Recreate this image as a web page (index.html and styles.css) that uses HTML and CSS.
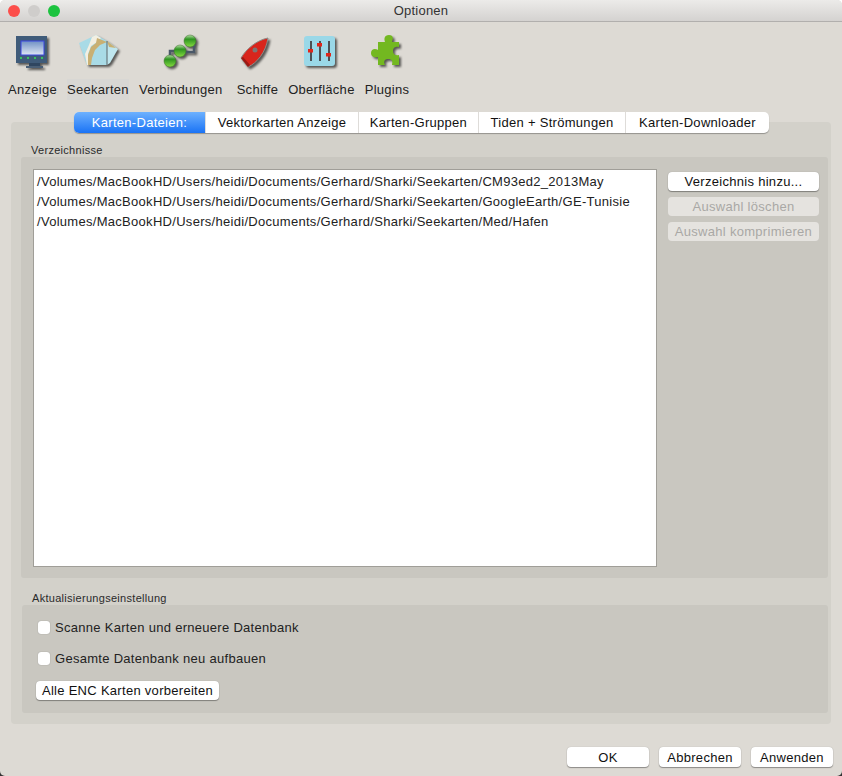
FILE: index.html
```html
<!DOCTYPE html>
<html>
  <head>
    <meta charset="UTF-8" />
    <meta name="viewport" content="width=device-width, initial-scale=1.0" />
    <title>Optionen</title>
    <link rel="stylesheet" href="styles.css">
  </head>
  <body>
    <div class="window">
      <div class="titlebar">
        <div class="lights">
          <span class="light light-red"></span>
          <span class="light light-off"></span>
          <span class="light light-green"></span>
        </div>
        <div class="title">Optionen</div>
      </div>

      <div class="toolbar">
        <div class="tool">
          <svg class="tool-icon" viewBox="0 0 40 40">
            <defs>
              <linearGradient id="screenFill" x1="0" y1="0" x2="0" y2="1">
                <stop offset="0" stop-color="#6f90c4" />
                <stop offset="1" stop-color="#dfe6f4" />
              </linearGradient>
            </defs>
            <rect x="16" y="32" width="11" height="4" fill="#2f4660" />
            <rect x="13" y="36" width="17" height="2" fill="#4a5f76" />
            <rect x="3" y="6" width="31" height="27" fill="#3f5b79" />
            <rect x="8" y="11" width="23" height="14" fill="url(#screenFill)" stroke="#3a44e0" stroke-width="1" />
            <rect x="7" y="27" width="2" height="2" fill="#38c060" />
            <rect x="14" y="27" width="2" height="2" fill="#38c060" />
            <rect x="21" y="27" width="2" height="2" fill="#38c060" />
            <rect x="28" y="27" width="2" height="2" fill="#38c060" />
          </svg>
          <span class="tool-label">Anzeige</span>
        </div>
        <div class="tool tool-active">
          <svg class="tool-icon" viewBox="0 0 40 40">
            <path d="M1 13 L18 5 L29 11 L29 35 L9 35 Z" fill="#a9dbe6" />
            <path d="M29 11 L40 19 L32 33 L29 35 Z" fill="#bfe6ee" />
            <path d="M14 7 L18 5 L23 8 L19 12 L13 16 L10 24 L10 35 L9 35 L7 24 L11 15 Z" fill="#f2efe2" />
            <path d="M19 8 L29 12 L22 15 L17 20 L14 28 L13 35 L10 35 L10 25 L13 17 L18 13 Z" fill="#c9b073" />
            <path d="M29 11 L38 18 L31 17 Z" fill="#c9b073" />
            <path d="M29 11 V35" stroke="#5a6468" stroke-width="1" fill="none" />
          </svg>
          <span class="tool-label">Seekarten</span>
        </div>
        <div class="tool">
          <svg class="tool-icon" viewBox="0 0 40 40">
            <defs>
              <linearGradient id="ballFill" x1="0" y1="0" x2="0" y2="1">
                <stop offset="0" stop-color="#b5dfa6" />
                <stop offset="0.35" stop-color="#2e9420" />
                <stop offset="1" stop-color="#86dc42" />
              </linearGradient>
            </defs>
            <path d="M9 28 V21 H19 M19 22 H33 V14 H29" stroke="#4a5868" stroke-width="2.5" fill="none" />
            <circle cx="29" cy="11" r="6" fill="url(#ballFill)" stroke="#3c6b2c" stroke-width="0.5" />
            <circle cx="19" cy="21" r="6" fill="url(#ballFill)" stroke="#3c6b2c" stroke-width="0.5" />
            <circle cx="9" cy="31" r="6" fill="url(#ballFill)" stroke="#3c6b2c" stroke-width="0.5" />
          </svg>
          <span class="tool-label">Verbindungen</span>
        </div>
        <div class="tool tool-ship">
          <svg class="tool-icon" viewBox="0 0 40 40">
            <path d="M31 8 C20 10 9 19 4 28 L11 37 C20 33 29 22 31 8 Z" fill="#d8251c" stroke="#8d8a86" stroke-width="1" />
            <path d="M4 28 L11 37 L13 35 L6 27 Z" fill="#9c1a14" />
            <circle cx="18" cy="20" r="2.5" fill="#7d7472" />
          </svg>
          <span class="tool-label">Schiffe</span>
        </div>
        <div class="tool">
          <svg class="tool-icon" viewBox="0 0 40 40">
            <rect x="3" y="6" width="31" height="30" rx="3" fill="#9ad8e8" />
            <rect x="9" y="11" width="2" height="20" fill="#4c5054" />
            <rect x="18" y="11" width="2" height="20" fill="#4c5054" />
            <rect x="27" y="11" width="2" height="20" fill="#4c5054" />
            <rect x="7" y="19" width="5" height="3.5" fill="#e0261a" />
            <rect x="16" y="13" width="5" height="3.5" fill="#e0261a" />
            <rect x="25" y="23" width="5" height="3.5" fill="#e0261a" />
          </svg>
          <span class="tool-label">Oberfläche</span>
        </div>
        <div class="tool">
          <svg class="tool-icon" viewBox="0 0 40 40">
            <path d="M11 12 H18 C17 9 17 5 22 5 C27 5 26 9 25 12 H32 V17 C27 16 26 19 26 21 C26 24 28 26 32 25 V35 H25 C26 31 25 29 21 29 C18 29 16 31 18 35 H11 V27 C8 28 4 27 4 23 C4 19 8 18 11 20 Z" fill="#73b820" />
          </svg>
          <span class="tool-label">Plugins</span>
        </div>
      </div>

      <div class="main">
        <div class="tabs">
          <div class="tab tab-active">Karten-Dateien:</div>
          <div class="tab">Vektorkarten Anzeige</div>
          <div class="tab">Karten-Gruppen</div>
          <div class="tab">Tiden + Strömungen</div>
          <div class="tab">Karten-Downloader</div>
        </div>
        <div class="panel">
          <div class="group-title">Verzeichnisse</div>
          <div class="group group-dirs">
            <div class="dir-list">
              <div class="dir-row">/Volumes/MacBookHD/Users/heidi/Documents/Gerhard/Sharki/Seekarten/CM93ed2_2013May</div>
              <div class="dir-row">/Volumes/MacBookHD/Users/heidi/Documents/Gerhard/Sharki/Seekarten/GoogleEarth/GE-Tunisie</div>
              <div class="dir-row">/Volumes/MacBookHD/Users/heidi/Documents/Gerhard/Sharki/Seekarten/Med/Hafen</div>
            </div>
            <div class="dir-buttons">
              <button class="btn">Verzeichnis hinzu...</button>
              <button class="btn" disabled>Auswahl löschen</button>
              <button class="btn" disabled>Auswahl komprimieren</button>
            </div>
          </div>
          <div class="group-title group-title-update">Aktualisierungseinstellung</div>
          <div class="group group-update">
            <label class="check"><input type="checkbox" /> Scanne Karten und erneuere Datenbank</label>
            <label class="check"><input type="checkbox" /> Gesamte Datenbank neu aufbauen</label>
            <button class="btn btn-enc">Alle ENC Karten vorbereiten</button>
          </div>
        </div>
      </div>

      <div class="footer">
        <button class="btn btn-footer">OK</button>
        <button class="btn btn-footer">Abbrechen</button>
        <button class="btn btn-footer">Anwenden</button>
      </div>
    </div>
  </body>
</html>
```

FILE: styles.css
```css
html,
body {
  margin: 0;
  height: 776px;
  overflow: hidden;
}
body {
  font-family: "Liberation Sans", Arial, sans-serif;
  font-size: 13px;
  letter-spacing: 0.29px;
  color: #222;
  background: linear-gradient(#fff 50%, #333 50%);
}
.window {
  height: 776px;
  display: flex;
  flex-direction: column;
  background-color: #dddad4;
  border-radius: 5px;
  overflow: hidden;
}

/* title bar */
.titlebar {
  height: 21px;
  flex: none;
  display: grid;
  grid-template-columns: 1fr auto 1fr;
  align-items: center;
  background: linear-gradient(#ecebe9, #d4d2d0);
  border-bottom: 1px solid #b1afad;
}
.lights {
  display: flex;
  gap: 8px;
  padding-left: 8px;
}
.light {
  width: 12px;
  height: 12px;
  border-radius: 50%;
}
.light-red {
  background-color: #fc4f4b;
}
.light-off {
  background-color: #cfcdcb;
}
.light-green {
  background-color: #1cc33f;
}
.title {
  letter-spacing: 0.2px;
  color: #333;
}

/* toolbar */
.toolbar {
  height: 90px;
  flex: none;
  display: flex;
  gap: 10px;
  padding-left: 8px;
  box-sizing: border-box;
}
.tool {
  display: flex;
  flex-direction: column;
  align-items: center;
  padding-top: 8px;
}
.tool-ship {
  margin-left: 4px;
}
.tool-icon {
  width: 40px;
  height: 40px;
  filter: drop-shadow(2px 2px 1px rgba(0, 0, 0, 0.6));
}
.tool-label {
  margin-top: 9px;
  padding: 3px 0;
  line-height: 15px;
  white-space: nowrap;
}
.tool-active .tool-label {
  background-color: #d8d7d4;
}

/* tabs */
.main {
  flex: none;
  margin: 0 11px;
}
.tabs {
  display: grid;
  grid-template-columns: 131px 153px 120px 147px 144px;
  width: 695px;
  height: 21px;
  margin-left: 63px;
  margin-bottom: -11px;
  position: relative;
  background-color: #fff;
  border-radius: 5px;
  box-shadow: 0 1px 1px rgba(0, 0, 0, 0.3);
  overflow: hidden;
}
.tab {
  display: flex;
  align-items: center;
  justify-content: center;
  border-left: 1px solid #dedcd9;
  white-space: nowrap;
  color: #111;
}
.tab:first-child {
  border-left: none;
}
.tab-active {
  color: #fff;
  background: linear-gradient(#6db1ff, #1a73f5);
}

/* panels */
.panel {
  height: 602px;
  box-sizing: border-box;
  padding: 22px 3px 11px 10px;
  background-color: #d3d1ca;
  border-radius: 4px;
}
.group-title {
  height: 13px;
  margin-left: 10px;
  font-size: 11px;
  line-height: 13px;
  color: #2a2a2a;
}
.group-title-update {
  margin-top: 14px;
  margin-left: 11px;
}
.group {
  background-color: #c9c7c0;
  border-radius: 3px;
  box-sizing: border-box;
}
.group-dirs {
  height: 421px;
  display: flex;
  gap: 11px;
  padding: 12px 9px 0 12px;
}
.dir-list {
  width: 624px;
  height: 398px;
  box-sizing: border-box;
  padding: 2px 3px;
  background-color: #fff;
  border: 1px solid #a09e98;
}
.dir-row {
  height: 20px;
  line-height: 20px;
  white-space: nowrap;
}
.dir-buttons {
  width: 151px;
  display: flex;
  flex-direction: column;
  gap: 6px;
  padding-top: 3px;
}
.btn {
  height: 19px;
  padding: 0;
  font-family: inherit;
  font-size: 13px;
  letter-spacing: 0.29px;
  color: #111;
  background-color: #fff;
  border: none;
  border-radius: 4px;
  box-shadow: 0 1px 1px rgba(0, 0, 0, 0.35), 0 0 1px rgba(0, 0, 0, 0.25);
  cursor: pointer;
}
.btn:disabled {
  color: #a9a8a5;
  background-color: #e5e3df;
  box-shadow: none;
}
.group-update {
  height: 108px;
  margin-left: 1px;
  padding: 16px 0 0 16px;
  display: flex;
  flex-direction: column;
  align-items: flex-start;
}
.check {
  display: flex;
  align-items: center;
  gap: 5px;
  height: 13px;
  margin-bottom: 18px;
  color: #222;
}
.check input {
  appearance: none;
  width: 12px;
  height: 13px;
  margin: 0;
  background-color: #fff;
  border-radius: 3px;
  box-shadow: 0 0 1px rgba(0, 0, 0, 0.4);
}
.btn-enc {
  width: 183px;
  margin-top: -2px;
  margin-left: -2px;
}

/* footer */
.footer {
  flex: none;
  display: flex;
  justify-content: flex-end;
  gap: 10px;
  padding: 23px 9px 0 0;
}
.btn-footer {
  width: 82px;
  height: 20px;
}
```
